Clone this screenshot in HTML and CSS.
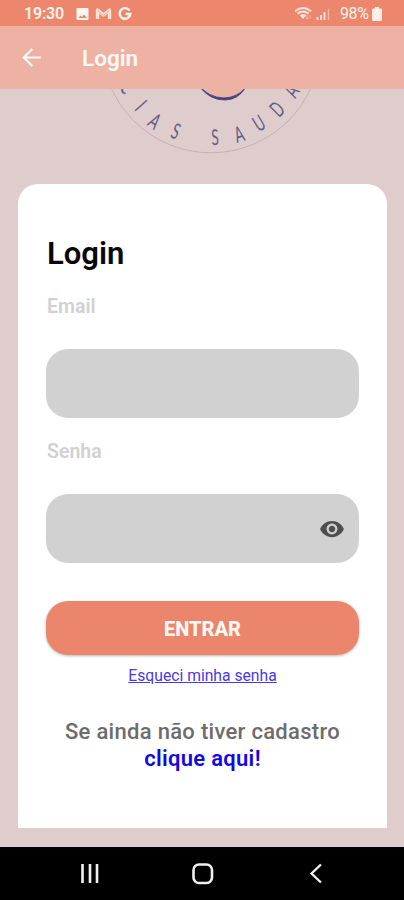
FILE: index.html
```
<!DOCTYPE html>
<html lang="pt-BR">
<head>
<meta charset="utf-8">
<title>Login</title>
<link rel="stylesheet" href="styles.css">
</head>
<body>
<div class="screen">
  <div class="status">
    <span class="clock">19:30</span>
    <svg class="notifications" width="56" height="14" viewBox="0 0 56 14" fill="#fff6ef">
      <path fill-rule="evenodd" d="M1.500 1h10q1 0 1 1v10q0 1-1 1h-10q-1 0-1-1V2q0-1 1-1zM2.500 11h8.500L8 7.500 6 10 4.500 8.500z"/>
      <path d="M21.500 12V3l6 5 6-5v9" fill="none" stroke="#ffe3d6" stroke-width="3.400" stroke-linejoin="round"/>
      <path d="M21.500 3.500l6 5 6-5M24 7v5M31 7v5" fill="none" stroke="#ee937a" stroke-width=".7"/>
      <path d="M53.500 3.600A5.300 5.300 0 1 0 54.300 7H49.500" fill="none" stroke="#fff6ef" stroke-width="2.400"/>
    </svg>
    <svg class="signal" width="38" height="16" viewBox="0 0 38 16" fill="none" stroke="#ffe6da">
      <path d="M0 5.200Q8-1.200 16 5.200M2.500 7.600q5.500-4 11 0M5.500 10q2.500-2 5 0" stroke-width="2"/>
      <path d="M5.500 10h5L8 13z" fill="#ffe6da" stroke="none"/>
      <path d="M12 9v4m-1.200-1.300L12 13l1.200-1.300M15 13V9" stroke-width=".7" opacity=".7"/>
      <path d="M22.500 14v-3M26 14V9M29.500 14V6" stroke-width="1.800"/>
      <path d="M33.500 14V3" stroke-width="1.500" opacity=".5"/>
    </svg>
    <span class="percent">98%</span>
    <svg class="battery" width="10" height="14" viewBox="0 0 10 14" fill="#fff0e7"><path d="M3 0h4v1.500h1.500Q10 1.500 10 3v9.500q0 1.500-1.500 1.500h-7Q0 14 0 12.500V3q0-1.500 1.500-1.500H3z"/></svg>
  </div>
  <header class="appbar">
    <svg class="back" width="20" height="20" viewBox="0 0 20 20" fill="none" stroke="#fff9f5" stroke-width="2.200"><path d="M18.800 9.500H2.500M10.300 1L1.800 9.500l8.500 8.500"/></svg>
    <span class="title">Login</span>
  </header>
  <main class="content">
    <svg class="logo" width="404" height="95" viewBox="0 89 404 95">
      <circle cx="211" cy="43.500" r="109.300" fill="none" stroke="#b9a8ae" stroke-width=".8"/>
      <circle cx="224" cy="73" r="25" fill="#ecb2a2"/>
      <path d="M199 85Q208 97.500 224 98Q238 97.500 246 87Q238 100 225 100Q210 100.500 199 86z" fill="#494080" stroke="#494080" stroke-width=".9"/>
      <g class="ring-text">
        <text transform="translate(128.500 87.500) rotate(62) scale(.62 1)" y="8">C</text>
        <text transform="translate(141 105.500) rotate(49) scale(.62 1)" y="8">I</text>
        <text transform="translate(155 121) rotate(36) scale(.62 1)" y="8">A</text>
        <text transform="translate(176 131) rotate(22) scale(.62 1)" y="8">S</text>
        <text transform="translate(215 137) rotate(-3) scale(.62 1)" y="8">S</text>
        <text transform="translate(239 134) rotate(-17) scale(.62 1)" y="8">A</text>
        <text transform="translate(259 123) rotate(-31) scale(.62 1)" y="8">U</text>
        <text transform="translate(277 109) rotate(-45) scale(.62 1)" y="8">D</text>
        <text transform="translate(291 91) rotate(-59) scale(.62 1)" y="8">A</text>
      </g>
    </svg>
    <section class="card">
      <h1>Login</h1>
      <label class="email-label">Email</label>
      <div class="field"></div>
      <label class="senha-label">Senha</label>
      <div class="field">
        <svg width="26" height="26" viewBox="0 0 24 24" fill="#4f4f4f"><path d="M12 4.500C7 4.500 2.730 7.610 1 12c1.730 4.390 6 7.500 11 7.500s9.270-3.110 11-7.500c-1.730-4.390-6-7.500-11-7.500zM12 17c-2.760 0-5-2.240-5-5s2.240-5 5-5 5 2.240 5 5-2.240 5-5 5zm0-8c-1.660 0-3 1.340-3 3s1.340 3 3 3 3-1.340 3-3-1.340-3-3-3z"/></svg>
      </div>
      <div class="submit">ENTRAR</div>
      <a class="forgot">Esqueci minha senha</a>
      <p class="signup"><span>Se ainda não tiver cadastro</span><a>clique aqui!</a></p>
    </section>
  </main>
  <nav class="navbar">
    <svg width="404" height="53" viewBox="0 0 404 53" fill="none" stroke="#f0f0f0">
      <path d="M82.500 17v19M90 17v19M97 17v19" stroke-width="2.600"/>
      <rect x="193.500" y="17.500" width="18.500" height="18.500" rx="5.500" stroke-width="2.600"/>
      <path d="M321 17.500L311.500 26.500 321 35.500" stroke-width="2.400"/>
    </svg>
  </nav>
</div>
</body>
</html>
```
FILE: styles.css
```
body {
  margin: 0;
  font-family: Roboto, sans-serif;
}

svg {
  display: block;
  flex: none;
}

.screen {
  display: flex;
  flex-direction: column;
  width: 404px;
  height: 900px;
  overflow: hidden;
  background: #dfcdce;
}

.status {
  display: flex;
  align-items: center;
  box-sizing: border-box;
  height: 26px;
  padding: 1px 22px 0 24px;
  background: #ec866c;
  color: #fff3eb;
  font-size: 16px;
}

.clock {
  width: 52px;
  font-weight: 600;
  letter-spacing: -0.2px;
}

.signal {
  margin-left: auto;
}

.percent {
  width: 30px;
  margin: 0 2px 0 7px;
  font-size: 16px;
  letter-spacing: -0.4px;
  white-space: nowrap;
}

.appbar {
  display: flex;
  align-items: center;
  height: 63px;
  padding-left: 22px;
  background: #edb2a3;
  color: #fff9f5;
}

.title {
  margin-left: 40px;
  font-size: 22.5px;
  font-weight: 600;
}

.content {
  height: 758px;
}

.ring-text {
  font-family: Lato, sans-serif;
  font-size: 22px;
  text-anchor: middle;
  fill: #655b83;
}

.card {
  display: flex;
  flex-direction: column;
  box-sizing: border-box;
  width: 369px;
  height: 644px;
  margin-left: 18px;
  padding: 52px 28px 0;
  border-radius: 20px 20px 0 0;
  background: #fff;
}

h1 {
  margin: 0 0 0 1px;
  color: #080808;
  font-size: 31px;
  font-weight: 600;
  line-height: 36px;
}

label {
  padding-left: 1px;
  color: #d1d1d1;
  font-size: 19.5px;
  font-weight: 600;
  line-height: 24px;
}

.email-label {
  margin: 23px 0 30px;
}

.senha-label {
  margin: 22px 0 30px;
}

.field {
  display: flex;
  flex: none;
  align-items: center;
  justify-content: flex-end;
  box-sizing: border-box;
  height: 69px;
  padding-right: 14px;
  border-radius: 22px;
  background: #d1d1d1;
}

.submit {
  flex: none;
  height: 54px;
  margin-top: 38px;
  border-radius: 22px;
  background: #eb866c;
  box-shadow: 0 1px 3px rgba(0, 0, 0, 0.28);
  color: #fff8f3;
  font-size: 20px;
  font-weight: 800;
  line-height: 56px;
  text-align: center;
}

.forgot {
  align-self: center;
  margin-top: 10px;
  color: #4a38ee;
  font-size: 15.7px;
  line-height: 22px;
  text-decoration: underline;
}

.signup {
  display: flex;
  flex-direction: column;
  align-items: center;
  margin: 31px 0 0;
  color: #6c6c6c;
  font-size: 22px;
  font-weight: 500;
  line-height: 27px;
  letter-spacing: 0.3px;
  white-space: nowrap;
}

.signup a {
  color: #1108e4;
  font-weight: 600;
}

.navbar {
  height: 53px;
  background: #000;
}
```
